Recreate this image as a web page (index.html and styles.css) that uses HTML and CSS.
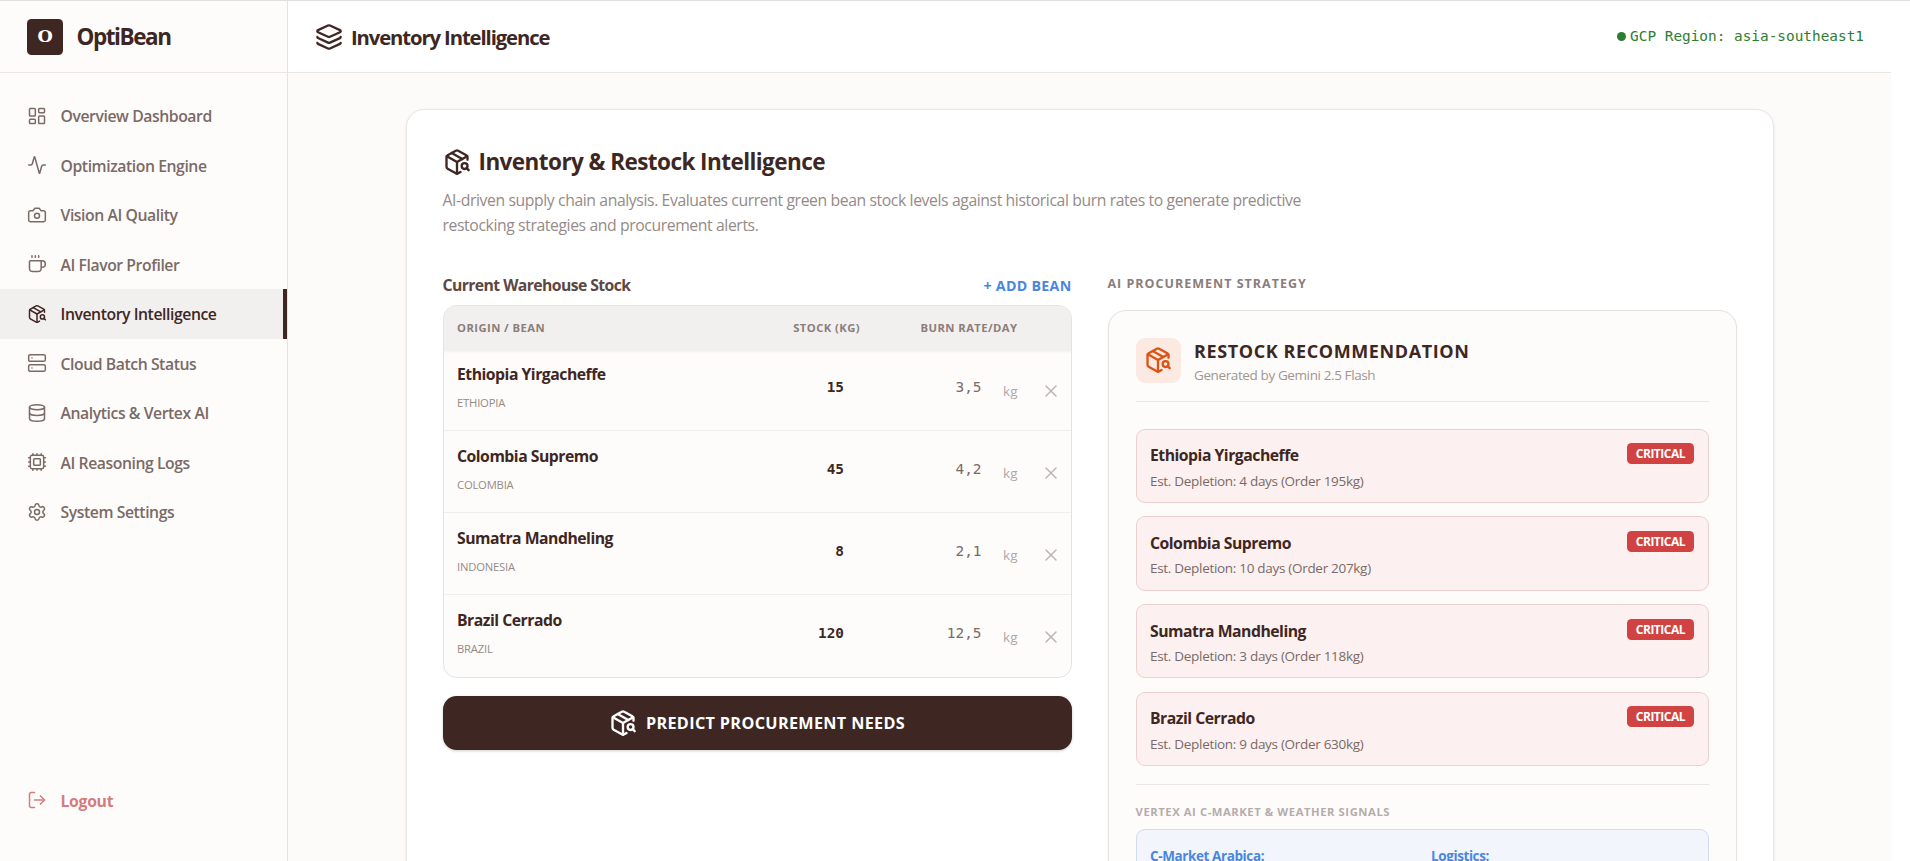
FILE: index.html
```
<!DOCTYPE html>
<html lang="en">

<head>
    <meta charset="UTF-8">
    <title>OptiBean</title>
    <link rel="stylesheet" href="styles.css">
</head>

<body>
    <svg class="sprite">
        <symbol id="package" viewBox="0 0 24 24">
            <path d="M21 10V8a2 2 0 0 0-1-1.73l-7-4a2 2 0 0 0-2 0l-7 4A2 2 0 0 0 3 8v8a2 2 0 0 0 1 1.73l7 4a2 2 0 0 0 2 0l2-1.14" />
            <path d="m7.5 4.27 9 5.15" />
            <path d="M3.29 7 12 12l8.71-5" />
            <path d="M12 22V12" />
            <circle cx="18.5" cy="15.5" r="2.5" />
            <path d="M20.27 17.27 22 19" />
        </symbol>
        <symbol id="close" viewBox="0 0 24 24">
            <path d="M18 6 6 18" />
            <path d="m6 6 12 12" />
        </symbol>
    </svg>

    <div class="app">
        <aside class="sidebar">
            <div class="brand">
                <div class="logo">O</div>
                <span class="brand-name">OptiBean</span>
            </div>
            <nav class="nav">
                <a class="nav-item">
                    <svg class="icon" viewBox="0 0 24 24"><rect width="7" height="9" x="3" y="3" rx="1" /><rect width="7" height="5" x="14" y="3" rx="1" /><rect width="7" height="9" x="14" y="12" rx="1" /><rect width="7" height="5" x="3" y="16" rx="1" /></svg>
                    <span>Overview Dashboard</span>
                </a>
                <a class="nav-item">
                    <svg class="icon" viewBox="0 0 24 24"><path d="M22 12h-2.48a2 2 0 0 0-1.93 1.46l-2.35 8.36a.25.25 0 0 1-.48 0L9.24 2.18a.25.25 0 0 0-.48 0l-2.35 8.36A2 2 0 0 1 4.49 12H2" /></svg>
                    <span>Optimization Engine</span>
                </a>
                <a class="nav-item">
                    <svg class="icon" viewBox="0 0 24 24"><path d="M14.5 4h-5L7 7H4a2 2 0 0 0-2 2v9a2 2 0 0 0 2 2h16a2 2 0 0 0 2-2V9a2 2 0 0 0-2-2h-3l-2.5-3z" /><circle cx="12" cy="13" r="3" /></svg>
                    <span>Vision AI Quality</span>
                </a>
                <a class="nav-item">
                    <svg class="icon" viewBox="0 0 24 24"><path d="M10 2v2M14 2v2M6 2v2" /><path d="M16 8a1 1 0 0 1 1 1v8a4 4 0 0 1-4 4H7a4 4 0 0 1-4-4V9a1 1 0 0 1 1-1h14a4 4 0 1 1 0 8h-1" /></svg>
                    <span>AI Flavor Profiler</span>
                </a>
                <a class="nav-item active">
                    <svg class="icon"><use href="#package" /></svg>
                    <span>Inventory Intelligence</span>
                </a>
                <a class="nav-item">
                    <svg class="icon" viewBox="0 0 24 24"><rect width="20" height="8" x="2" y="2" rx="2" /><rect width="20" height="8" x="2" y="14" rx="2" /><path d="M6 6h.01M6 18h.01" /></svg>
                    <span>Cloud Batch Status</span>
                </a>
                <a class="nav-item">
                    <svg class="icon" viewBox="0 0 24 24"><ellipse cx="12" cy="5" rx="9" ry="3" /><path d="M3 5v14a9 3 0 0 0 18 0V5" /><path d="M3 12a9 3 0 0 0 18 0" /></svg>
                    <span>Analytics &amp; Vertex AI</span>
                </a>
                <a class="nav-item">
                    <svg class="icon" viewBox="0 0 24 24"><path d="M12 20v2M12 2v2M17 20v2M17 2v2M2 12h2M2 17h2M2 7h2M20 12h2M20 17h2M20 7h2M7 20v2M7 2v2" /><rect width="16" height="16" x="4" y="4" rx="2" /><rect width="8" height="8" x="8" y="8" rx="1" /></svg>
                    <span>AI Reasoning Logs</span>
                </a>
                <a class="nav-item">
                    <svg class="icon" viewBox="0 0 24 24"><path d="M9.671 4.136a2.34 2.34 0 0 1 4.659 0 2.34 2.34 0 0 0 3.319 1.915 2.34 2.34 0 0 1 2.33 4.033 2.34 2.34 0 0 0 0 3.831 2.34 2.34 0 0 1-2.33 4.033 2.34 2.34 0 0 0-3.319 1.915 2.34 2.34 0 0 1-4.659 0 2.34 2.34 0 0 0-3.32-1.915 2.34 2.34 0 0 1-2.33-4.033 2.34 2.34 0 0 0 0-3.831A2.34 2.34 0 0 1 6.35 6.051a2.34 2.34 0 0 0 3.319-1.915" /><circle cx="12" cy="12" r="3" /></svg>
                    <span>System Settings</span>
                </a>
            </nav>
            <a class="nav-item logout">
                <svg class="icon" viewBox="0 0 24 24"><path d="m16 17 5-5-5-5" /><path d="M21 12H9" /><path d="M9 21H5a2 2 0 0 1-2-2V5a2 2 0 0 1 2-2h4" /></svg>
                <span>Logout</span>
            </a>
        </aside>

        <main class="main">
            <header class="topbar">
                <svg class="icon icon-lg" viewBox="0 0 24 24"><path d="M12.83 2.18a2 2 0 0 0-1.66 0L2.6 6.08a1 1 0 0 0 0 1.83l8.58 3.91a2 2 0 0 0 1.66 0l8.58-3.9a1 1 0 0 0 0-1.83z" /><path d="M2 12a1 1 0 0 0 .58.91l8.6 3.91a2 2 0 0 0 1.65 0l8.58-3.9A1 1 0 0 0 22 12" /><path d="M2 17a1 1 0 0 0 .58.91l8.6 3.91a2 2 0 0 0 1.65 0l8.58-3.9A1 1 0 0 0 22 17" /></svg>
                <h1 class="page-title">Inventory Intelligence</h1>
                <div class="region"><span class="dot"></span><span>GCP Region: asia-southeast1</span></div>
            </header>

            <div class="content">
                <section class="card">
                    <div class="card-title">
                        <svg class="icon icon-lg"><use href="#package" /></svg>
                        <h2>Inventory &amp; Restock Intelligence</h2>
                    </div>
                    <p class="description">AI-driven supply chain analysis. Evaluates current green bean stock levels against historical burn rates to generate predictive<br>restocking strategies and procurement alerts.</p>

                    <div class="columns">
                        <div class="left">
                            <div class="stock-head">
                                <h3>Current Warehouse Stock</h3>
                                <button class="add">+ ADD BEAN</button>
                            </div>
                            <div class="table">
                                <div class="row thead">
                                    <span>ORIGIN / BEAN</span>
                                    <span class="right">STOCK (KG)</span>
                                    <span class="right">BURN RATE/DAY</span>
                                </div>
                                <div class="row">
                                    <div class="bean"><div class="name">Ethiopia Yirgacheffe</div><div class="origin">ETHIOPIA</div></div>
                                    <div class="stock">15</div>
                                    <div class="burn"><span class="num">3,5</span><span class="unit">kg</span></div>
                                    <svg class="icon remove"><use href="#close" /></svg>
                                </div>
                                <div class="row">
                                    <div class="bean"><div class="name">Colombia Supremo</div><div class="origin">COLOMBIA</div></div>
                                    <div class="stock">45</div>
                                    <div class="burn"><span class="num">4,2</span><span class="unit">kg</span></div>
                                    <svg class="icon remove"><use href="#close" /></svg>
                                </div>
                                <div class="row">
                                    <div class="bean"><div class="name">Sumatra Mandheling</div><div class="origin">INDONESIA</div></div>
                                    <div class="stock">8</div>
                                    <div class="burn"><span class="num">2,1</span><span class="unit">kg</span></div>
                                    <svg class="icon remove"><use href="#close" /></svg>
                                </div>
                                <div class="row">
                                    <div class="bean"><div class="name">Brazil Cerrado</div><div class="origin">BRAZIL</div></div>
                                    <div class="stock">120</div>
                                    <div class="burn"><span class="num">12,5</span><span class="unit">kg</span></div>
                                    <svg class="icon remove"><use href="#close" /></svg>
                                </div>
                            </div>
                            <button class="predict">
                                <svg class="icon icon-lg"><use href="#package" /></svg>
                                <span>PREDICT PROCUREMENT NEEDS</span>
                            </button>
                        </div>

                        <div class="strategy">
                            <h3 class="label">AI PROCUREMENT STRATEGY</h3>
                            <div class="panel">
                                <div class="panel-head">
                                    <div class="tile"><svg class="icon icon-lg"><use href="#package" /></svg></div>
                                    <div>
                                        <h4>RESTOCK RECOMMENDATION</h4>
                                        <p>Generated by Gemini 2.5 Flash</p>
                                    </div>
                                </div>
                                <div class="alerts">
                                    <div class="alert">
                                        <div><div class="name">Ethiopia Yirgacheffe</div><div class="detail">Est. Depletion: 4 days (Order 195kg)</div></div>
                                        <span class="badge">CRITICAL</span>
                                    </div>
                                    <div class="alert">
                                        <div><div class="name">Colombia Supremo</div><div class="detail">Est. Depletion: 10 days (Order 207kg)</div></div>
                                        <span class="badge">CRITICAL</span>
                                    </div>
                                    <div class="alert">
                                        <div><div class="name">Sumatra Mandheling</div><div class="detail">Est. Depletion: 3 days (Order 118kg)</div></div>
                                        <span class="badge">CRITICAL</span>
                                    </div>
                                    <div class="alert">
                                        <div><div class="name">Brazil Cerrado</div><div class="detail">Est. Depletion: 9 days (Order 630kg)</div></div>
                                        <span class="badge">CRITICAL</span>
                                    </div>
                                </div>
                                <div class="signals">
                                    <h5>VERTEX AI C-MARKET &amp; WEATHER SIGNALS</h5>
                                    <div class="signal-box">
                                        <strong>C-Market Arabica:</strong>
                                        <strong>Logistics:</strong>
                                    </div>
                                </div>
                            </div>
                        </div>
                    </div>
                </section>
            </div>
        </main>
    </div>
</body>

</html>
```
FILE: styles.css
```
html {
    font-size: 18px;
}

* {
    box-sizing: border-box;
}

body {
    margin: 0;
    height: 100vh;
    overflow: hidden;
    background-color: white;
    color: #3e2723;
    font-family: "Open Sans", "Noto Sans", sans-serif;
    font-size: 0.875rem;
    line-height: 1.25rem;
    border-top: 1px solid #e0e0e0;
}

h1, h2, h3, h4, h5, p {
    margin: 0;
}

button {
    border: none;
    background: none;
    padding: 0;
    font-family: inherit;
    cursor: pointer;
}

.sprite {
    display: none;
}

.icon {
    width: 20px;
    height: 20px;
    flex-shrink: 0;
    fill: none;
    stroke: currentColor;
    stroke-width: 1.8;
    stroke-linecap: round;
    stroke-linejoin: round;
}

.icon-lg {
    width: 28px;
    height: 28px;
    stroke-width: 2;
}

.app {
    display: flex;
    height: 100%;
    padding-right: 19px;
}

/* Sidebar */
.sidebar {
    width: 16rem;
    flex-shrink: 0;
    display: flex;
    flex-direction: column;
    background-color: #fefcfb;
    border-right: 1px solid #e5e3e2;
    padding-bottom: 36px;
}

.brand {
    height: 4rem;
    display: flex;
    align-items: center;
    gap: 0.75rem;
    padding: 0 1.5rem;
    border-bottom: 1px solid #e9e6e5;
}

.logo {
    width: 36px;
    height: 36px;
    border-radius: 4.5px;
    background-color: #3e2723;
    color: white;
    font-family: "DejaVu Serif", serif;
    font-weight: bold;
    font-size: 17.5px;
    line-height: 35px;
    text-align: center;
}

.brand-name {
    padding-top: 2px;
    font-size: 22.5px;
    font-weight: 700;
    letter-spacing: -1.45px;
}

.nav {
    flex: 1;
    padding-top: 1rem;
}

.nav-item {
    display: flex;
    align-items: center;
    gap: 0.75rem;
    height: 49.5px;
    padding: 0 1.5rem;
    color: #7a6a66;
    font-weight: 600;
    letter-spacing: -0.43px;
}

.nav-item span {
    padding-top: 1px;
}

.nav-item.active {
    background-color: #f2f0ef;
    color: #3e2723;
    border-right: 4px solid #3e2723;
}

.logout {
    color: #d47c7c;
    font-weight: 700;
    letter-spacing: -0.3px;
}

/* Main area */
.main {
    flex: 1;
    background-color: #fdfbfa;
}

.topbar {
    height: 4rem;
    display: flex;
    align-items: center;
    gap: 0.5rem;
    padding: 0 1.5rem;
    background-color: white;
    border-bottom: 1px solid #e9e6e5;
}

.page-title {
    margin-left: -1px;
    padding-top: 2px;
    font-size: 20.25px;
    font-weight: 700;
    letter-spacing: -1.1px;
}

.region {
    display: flex;
    align-items: center;
    gap: 4px;
    margin-left: auto;
    color: #2e7d32;
    font-family: "DejaVu Sans Mono", monospace;
    font-size: 14.4px;
}

.dot {
    width: 9px;
    height: 9px;
    border-radius: 50%;
    background-color: #2e7d32;
}

.content {
    max-width: 80rem;
    margin: 0 auto;
    padding: 2rem;
}

.card {
    height: 1000px;
    padding: 2rem;
    background-color: white;
    border: 1px solid #e9e6e5;
    border-radius: 1rem;
    box-shadow: 0 1px 3px rgba(62, 39, 35, 0.1);
}

.card-title {
    display: flex;
    align-items: center;
    gap: 0.5rem;
    height: 31.5px;
}

.card-title h2 {
    margin-left: -1px;
    padding-top: 1px;
    font-size: 22.5px;
    font-weight: 700;
    letter-spacing: -0.56px;
}

.description {
    margin-top: 10px;
    margin-bottom: -1px;
    line-height: 25.6px;
    color: #968a87;
    letter-spacing: -0.4px;
    white-space: nowrap;
}

.columns {
    display: grid;
    grid-template-columns: 1fr 1fr;
    gap: 2rem;
    margin-top: 2rem;
}

/* Stock table */
.stock-head {
    display: flex;
    justify-content: space-between;
    align-items: center;
    height: 22.5px;
    margin-bottom: 9px;
}

.stock-head h3 {
    padding-top: 1px;
    font-size: 15.75px;
    color: #5d4742;
    letter-spacing: -0.58px;
}

.add {
    padding-top: 1px;
    color: #4a86e0;
    font-size: 14.2px;
    font-weight: 700;
    letter-spacing: 0.3px;
}

.table {
    border: 1px solid #e5e3e2;
    border-radius: 0.75rem;
    overflow: hidden;
    background-color: #fefcfb;
}

.row {
    display: grid;
    grid-template-columns: 1fr 120px 157.5px 39.5px;
    height: 82px;
    padding: 0 13.5px;
    border-bottom: 1px solid #f0eeed;
}

.row:last-child {
    border-bottom: none;
}

.thead {
    position: relative;
    align-items: center;
    height: 45px;
    margin-bottom: -2.5px;
    border-bottom: none;
    background-color: #f2f0ef;
    box-shadow: 0 1px 2px rgba(62, 39, 35, 0.06);
    color: #8a7d7a;
    font-size: 11.25px;
    font-weight: 700;
    letter-spacing: 0.43px;
}

.right {
    text-align: right;
}

.name {
    font-weight: 700;
    letter-spacing: -0.49px;
}

.bean {
    padding-top: 14px;
}

.origin {
    margin-top: 7px;
    color: #968a87;
    font-size: 11.25px;
    letter-spacing: -0.2px;
}

.stock {
    padding: 27px 16px 0 0;
    text-align: right;
    font-family: "DejaVu Sans Mono", monospace;
    font-size: 14.4px;
    font-weight: 700;
}

.burn {
    display: flex;
    justify-content: flex-end;
    padding-top: 27px;
    color: #7a6a66;
}

.num {
    font-family: "DejaVu Sans Mono", monospace;
    font-size: 14.4px;
}

.unit {
    width: 36px;
    padding-top: 4px;
    text-align: right;
    color: #b0a6a3;
    font-size: 13.5px;
}

.remove {
    justify-self: end;
    margin: 32px -4px 0 0;
    color: #bdb4b2;
}

.predict {
    display: flex;
    justify-content: center;
    align-items: center;
    gap: 0.5rem;
    width: 100%;
    height: 54px;
    margin-top: 1rem;
    border-radius: 0.75rem;
    background-color: #3e2723;
    box-shadow: 0 1px 3px rgba(0, 0, 0, 0.2);
    color: white;
    font-size: 16.2px;
    font-weight: 700;
    letter-spacing: 0.35px;
}

/* Strategy panel */
.label {
    padding-top: 1px;
    margin-bottom: 17px;
    color: #8a7d7a;
    font-size: 12.5px;
    line-height: 18px;
    letter-spacing: 1px;
}

.panel {
    height: 700px;
    padding: 1.5rem;
    background-color: #fefcfb;
    border: 1px solid #e5e3e2;
    border-radius: 1rem;
    box-shadow: 0 1px 2px rgba(62, 39, 35, 0.1);
}

.panel-head {
    display: flex;
    gap: 0.75rem;
    height: 64px;
    border-bottom: 1px solid #e9e6e5;
}

.tile {
    display: flex;
    align-items: center;
    justify-content: center;
    width: 45px;
    height: 45px;
    border-radius: 9px;
    background-color: #fbe9e2;
    color: #dd5412;
}

.panel-head h4 {
    font-size: 18px;
    line-height: 27px;
    letter-spacing: 0.6px;
}

.panel-head p {
    color: #a0958f;
    font-size: 13.5px;
    line-height: 20px;
    letter-spacing: -0.39px;
}

.alerts {
    display: grid;
    gap: 0.75rem;
    margin-top: 1.5rem;
}

.alert {
    display: flex;
    justify-content: space-between;
    align-items: flex-start;
    height: 74.2px;
    padding: 0.75rem;
    background-color: #fcf1f0;
    border: 1px solid #eccfcf;
    border-radius: 9px;
}

.alert .name {
    padding-top: 1px;
}

.detail {
    margin-top: 3px;
    color: #7a6a66;
    font-size: 13.5px;
    letter-spacing: -0.3px;
}

.badge {
    padding: 0 9px;
    border-radius: 4.5px;
    background-color: #d14343;
    color: white;
    font-size: 12px;
    font-weight: 700;
    line-height: 21px;
    letter-spacing: -0.5px;
}

.signals {
    margin-top: 1rem;
    padding-top: 1rem;
    border-top: 1px solid #e9e6e5;
}

.signals h5 {
    color: #b5acaa;
    font-size: 11.25px;
    line-height: 18px;
    letter-spacing: 0.57px;
}

.signal-box {
    display: grid;
    grid-template-columns: 1fr 1fr;
    gap: 1rem;
    height: 120px;
    margin-top: 8px;
    padding: 15px 0.75rem;
    background-color: #f2f6fc;
    border: 1px solid #cfdcf3;
    border-radius: 9px;
    color: #4a86e0;
    font-size: 13.5px;
    letter-spacing: -0.4px;
}
```
